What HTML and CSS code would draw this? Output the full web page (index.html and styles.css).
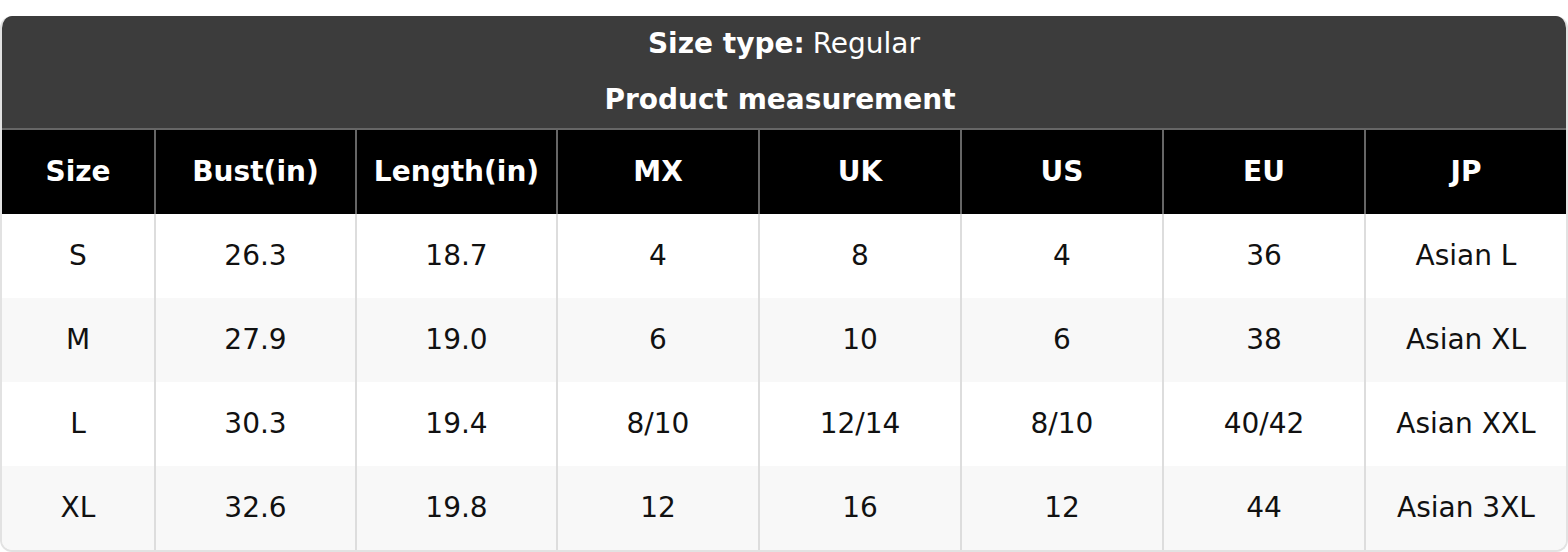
FILE: index.html
```html
<!DOCTYPE html>
<html>
<head>
<meta charset="utf-8">
<link rel="stylesheet" href="styles.css">
</head>
<body>
<div class="card">
  <div class="top">
    <div class="top-row"><b>Size type:</b> Regular</div>
    <div class="top-row"><b>Product measurement</b></div>
  </div>
  <table class="chart">
    <colgroup>
      <col class="c-size"><col class="c"><col class="c"><col class="c2"><col class="c2"><col class="c2"><col class="c2"><col>
    </colgroup>
    <thead>
      <tr><th>Size</th><th>Bust(in)</th><th>Length(in)</th><th>MX</th><th>UK</th><th>US</th><th>EU</th><th>JP</th></tr>
    </thead>
    <tbody>
      <tr><td>S</td><td>26.3</td><td>18.7</td><td>4</td><td>8</td><td>4</td><td>36</td><td>Asian L</td></tr>
      <tr><td>M</td><td>27.9</td><td>19.0</td><td>6</td><td>10</td><td>6</td><td>38</td><td>Asian XL</td></tr>
      <tr><td>L</td><td>30.3</td><td>19.4</td><td>8/10</td><td>12/14</td><td>8/10</td><td>40/42</td><td>Asian XXL</td></tr>
      <tr><td>XL</td><td>32.6</td><td>19.8</td><td>12</td><td>16</td><td>12</td><td>44</td><td>Asian 3XL</td></tr>
    </tbody>
  </table>
</div>
</body>
</html>
```

FILE: styles.css
```css
html, body {
  margin: 0;
  padding: 0;
  background: #ffffff;
}
body {
  padding-top: 16px;
  font-family: "DejaVu Sans", Verdana, sans-serif;
  font-size: 28px;
}
.card {
  width: 1568px;
  box-sizing: border-box;
  border: 2px solid #e2e2e2;
  border-top: none;
  border-radius: 12px;
  overflow: hidden;
}
.top {
  background: #3c3c3c;
  color: #ffffff;
  margin: 0 -2px;
}
.top-row {
  height: 56px;
  display: flex;
  align-items: center;
  justify-content: center;
  padding-bottom: 1px;
  box-sizing: border-box;
}
.top-row b {
  font-weight: bold;
  margin-right: 8px;
}
.chart {
  width: 100%;
  border-collapse: separate;
  border-spacing: 0;
  table-layout: fixed;
}
.c-size { width: 154px; }
.c { width: 201px; }
.c2 { width: 202px; }
.chart th {
  background: #000000;
  color: #ffffff;
  font-weight: bold;
  height: 86px;
  padding: 0 0 2px;
  border-top: 2px solid #666666;
  border-right: 2px solid #666666;
  box-sizing: border-box;
  text-align: center;
}
.chart th:last-child,
.chart td:last-child {
  border-right: none;
}
.chart td {
  height: 84px;
  padding: 0 0 2px;
  text-align: center;
  color: #111111;
  border-right: 2px solid #dddddd;
  box-sizing: border-box;
}
.chart tbody tr:nth-child(even) td {
  background: #f8f8f8;
}
```
